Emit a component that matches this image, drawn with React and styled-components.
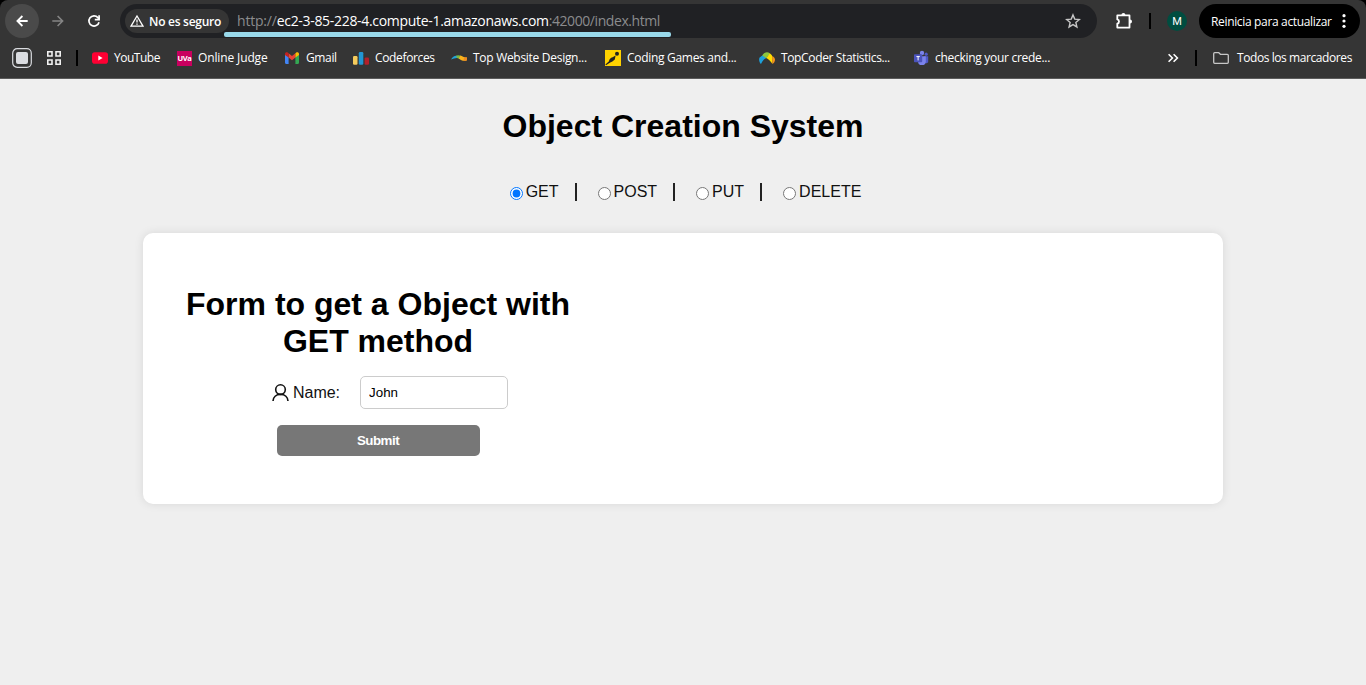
import React from "react";
import styled, { createGlobalStyle } from "styled-components";

const GlobalStyle = createGlobalStyle`
  *, *::before, *::after { box-sizing: border-box; }
  body {
    margin: 0;
    background: #efefef;
    color: #000;
    font-family: Arial, "Liberation Sans", sans-serif;
    font-size: 16px;
  }
`;

const Window = styled.div`
  min-height: 685px;
  overflow: hidden;
`;

/* ---------- browser chrome ---------- */

const Chrome = styled.header`
  height: 79px;
  background: #000;
  font-family: "Open Sans", "Noto Sans", sans-serif;
  color: #fff;
`;

const ChromeSurface = styled.div`
  height: 79px;
  background: #353535;
  border-radius: 8px 8px 0 0;
  border-bottom: 1px solid #5b5b5b;
`;

const Toolbar = styled.div`
  display: flex;
  align-items: center;
  height: 42px;
  padding: 0 6px 0 5px;
`;

const NavButton = styled.span`
  display: flex;
  align-items: center;
  justify-content: center;
  width: 34px;
  height: 34px;
  margin-right: 2px;
  border-radius: 50%;
  background: ${(p) => (p.$active ? "#4a4a4a" : "transparent")};
`;

const Omnibox = styled.div`
  position: relative;
  display: flex;
  align-items: center;
  width: 977px;
  height: 34px;
  margin-left: 7px;
  padding: 0 16px 0 5px;
  border-radius: 17px;
  background: #202124;
`;

const SecurityChip = styled.span`
  display: flex;
  align-items: center;
  gap: 5px;
  width: 104px;
  height: 24px;
  padding-left: 5px;
  border-radius: 12px;
  background: #353535;
  font-size: 12px;
  font-weight: 600;
  white-space: nowrap;
  letter-spacing: ${(p) => p.$track}px;
`;

const Url = styled.span`
  flex: 1;
  padding-left: 8px;
  font-size: 14px;
  line-height: 18px;
  color: #8b8c8e;
  white-space: nowrap;
`;

const UrlPart = styled.span`
  color: ${(p) => (p.$host ? "#fff" : "inherit")};
  letter-spacing: ${(p) => p.$track}px;
`;

const Marker = styled.i`
  position: absolute;
  left: 104px;
  top: 28px;
  width: 447px;
  height: 5px;
  border-radius: 2px;
  background: #99d9ea;
`;

const ToolbarActions = styled.div`
  display: flex;
  align-items: center;
  margin-left: 18px;
`;

const Separator = styled.i`
  width: 2px;
  height: 16px;
  background: #000;
  margin: ${(p) => p.$margin || "0"};
`;

const Avatar = styled.span`
  width: 20px;
  height: 20px;
  border-radius: 50%;
  background: #004d40;
  font-family: Roboto, sans-serif;
  font-size: 11px;
  line-height: 21px;
  text-align: center;
`;

const UpdatePill = styled.span`
  display: flex;
  align-items: center;
  justify-content: space-between;
  width: 161px;
  height: 34px;
  margin-left: 12px;
  padding: 0 14px 0 12px;
  border-radius: 17px;
  background: #000;
  font-size: 12px;
  white-space: nowrap;
  letter-spacing: ${(p) => p.$track}px;
`;

const BookmarksBar = styled.div`
  display: flex;
  align-items: center;
  height: 32px;
  padding-left: 12px;
  svg { flex: none; }
`;

const AppsIcon = styled.svg`
  margin-left: 14px;
`;

const Bookmark = styled.span`
  display: flex;
  align-items: center;
  gap: ${(p) => p.$gap || 6}px;
  flex: none;
  width: ${(p) => p.$width}px;
  font-size: 12px;
  line-height: 16px;
  white-space: nowrap;
  letter-spacing: ${(p) => p.$track || 0}px;
`;

const UvaBadge = styled.span`
  width: 15px;
  height: 15px;
  margin-left: 1px;
  background: #c9005f;
  font-size: 7.5px;
  font-weight: 700;
  line-height: 15px;
  text-align: center;
  letter-spacing: -0.3px;
`;

const BookmarksEnd = styled.div`
  display: flex;
  align-items: center;
  margin-left: auto;
`;

/* ---------- page ---------- */

const Page = styled.main`
  display: flex;
  flex-direction: column;
  align-items: center;
`;

const Title = styled.h1`
  margin: ${(p) => p.$margin};
  font-size: 32px;
  line-height: 37px;
  text-align: center;
`;

const MethodRow = styled.div`
  display: flex;
  align-items: flex-start;
  gap: 16px;
  height: 21px;
`;

const MethodOption = styled.label`
  display: flex;
  align-items: flex-start;
  line-height: 20px;
  color: #111;
  white-space: nowrap;
  input { margin: 5px 3px 0 5px; }
`;

const MethodDivider = styled.i`
  width: 2px;
  height: 18px;
  margin-top: 1px;
  background: #222;
`;

const Card = styled.section`
  width: 1080px;
  height: 271px;
  margin-top: 30px;
  padding: 53px 40px 0;
  border-radius: 10px;
  background: #fff;
  box-shadow: 0 0 10px rgba(0, 0, 0, 0.1);
`;

const Form = styled.form`
  display: flex;
  flex-direction: column;
  align-items: center;
  width: 390px;
`;

const Field = styled.label`
  display: flex;
  align-items: center;
  margin-left: 24px;
  color: #111;
  svg { margin: 0 4px 0 0; }
`;

const TextInput = styled.input`
  width: 148px;
  height: 33px;
  margin-left: 20px;
  padding: 8px;
  border: 1px solid #ccc;
  border-radius: 5px;
  font: 13.333px Arial, "Liberation Sans", sans-serif;
  color: #000;
  outline: none;
`;

const SubmitButton = styled.button`
  width: 203px;
  height: 31px;
  margin-top: 16px;
  padding: 0;
  border: 0;
  border-radius: 5px;
  background: #777;
  color: #fff;
  font: bold 13.333px Arial, "Liberation Sans", sans-serif;
  letter-spacing: -0.5px;
`;

/* ---------- icons ---------- */

const BackIcon = () => (
  <svg width="16" height="16" viewBox="0 0 16 16" fill="none" stroke="#fff" strokeWidth="1.8">
    <path d="M13.7 8H3.5M8.4 3L3.4 8l5 5" />
  </svg>
);
const ForwardIcon = () => (
  <svg width="16" height="16" viewBox="0 0 16 16" fill="none" stroke="#858585" strokeWidth="1.6">
    <path d="M2.3 8h10.2M7.6 3l5 5-5 5" />
  </svg>
);
const ReloadIcon = () => (
  <svg width="16" height="16" viewBox="0 0 16 16" fill="none" stroke="#fff" strokeWidth="1.7">
    <path d="M13 9.2A5.1 5.1 0 1 1 11.9 4.6L13.2 6.2" />
    <path d="M13.1 2.2v4.4H8.8" />
  </svg>
);
const WarningIcon = () => (
  <svg width="14" height="14" viewBox="0 0 14 14" fill="none" stroke="#fff" strokeWidth="1.3">
    <path d="M7 2L13 12.2H1Z" />
    <path d="M7 5.6v3M7 9.5v1.3" />
  </svg>
);
const StarIcon = () => (
  <svg width="16" height="16" viewBox="0 0 16 16" fill="none" stroke="#c7c7c7" strokeWidth="1.4">
    <path d="M8 1.9l1.75 4.2 4.55.4-3.45 3 1.04 4.45L8 11.6l-3.9 2.35L5.15 9.5 1.7 6.5l4.55-.4Z" />
  </svg>
);
const PuzzleIcon = () => (
  <svg width="18" height="18" viewBox="0 0 18 18" fill="none" stroke="#fff" strokeWidth="1.8" strokeLinejoin="round">
    <path d="M2.3 3.4h12.2v12.2H2.3v-3.9a2.2 2.2 0 0 0 0-4.3Z" />
    <path d="M6.4 3a2 2 0 0 1 4 0ZM15 7.5a2 2 0 0 1 0 4Z" fill="#fff" stroke="none" />
  </svg>
);
const DotsIcon = () => (
  <svg width="4" height="16" viewBox="0 0 4 16" fill="#fff">
    <circle cx="2" cy="2.7" r="1.6" />
    <circle cx="2" cy="8" r="1.6" />
    <circle cx="2" cy="13.3" r="1.6" />
  </svg>
);
const TabGroupIcon = () => (
  <svg width="20" height="20" viewBox="0 0 20 20">
    <rect x=".7" y=".7" width="18.6" height="18.6" rx="4.5" fill="none" stroke="#dadce0" strokeWidth="1.2" />
    <rect x="4" y="4" width="12" height="12" rx="2" fill="#dadce0" />
  </svg>
);
const GridIcon = () => (
  <AppsIcon width="16" height="16" viewBox="0 0 16 16" fill="none" stroke="#f1f1f1" strokeWidth="1.6">
    <path d="M1.8 1.8h4.2v4.2H1.8ZM10 1.8h4.2v4.2H10ZM1.8 10h4.2v4.2H1.8ZM10 10h4.2v4.2H10Z" />
  </AppsIcon>
);
const YouTubeIcon = () => (
  <svg width="16" height="16" viewBox="0 0 16 16">
    <rect x="0" y="2.3" width="16" height="11.4" rx="2.8" fill="#ff0033" />
    <path d="M6.3 5.6L10.6 8l-4.3 2.4Z" fill="#fff" />
  </svg>
);
const UvaIcon = () => <UvaBadge>UVa</UvaBadge>;
const GmailIcon = () => (
  <svg width="16" height="16" viewBox="0 0 16 16">
    <path d="M1 4v8.8c0 .7.5 1.2 1.1 1.2h2.5V6.8L1 4Z" fill="#4285f4" />
    <path d="M11.4 14h2.5c.6 0 1.1-.5 1.1-1.2V4l-3.6 2.8Z" fill="#34a853" />
    <path d="M4.6 3.3L8 5.9l3.4-2.6v4.2L8 10.2 4.6 7.5Z" fill="#ea4335" />
    <path d="M1 4c0-1.7 1.8-2.3 3-1.3l.6.5v4.4L1 4.9Z" fill="#c5221f" />
    <path d="M15 4c0-1.7-1.8-2.3-3-1.3l-.6.5v4.4L15 4.9Z" fill="#fbbc04" />
  </svg>
);
const CodeforcesIcon = () => (
  <svg width="16" height="16" viewBox="0 0 16 16">
    <rect x="0" y="6" width="4.5" height="8.8" rx="1.2" fill="#f5cb5c" />
    <rect x="5.8" y="2" width="4.5" height="12.8" rx="1.2" fill="#2196d3" />
    <rect x="11.6" y="7.4" width="4.4" height="7.4" rx="1.2" fill="#b3202a" />
  </svg>
);
const TopWebsiteIcon = () => (
  <svg width="16" height="16" viewBox="0 0 16 16">
    <path d="M0 9.6C1.5 6.3 4 5.2 6.2 5.8L8 8.4C5.2 7.6 2.8 8.6 0 9.6Z" fill="#22a3d8" />
    <path d="M5 5.8C6.6 4.8 8.7 5.2 10.2 6L8.3 8.8 6 8Z" fill="#7cba42" />
    <path d="M9.4 5.6C11.6 6.2 13 7.7 16 7.4L15.7 10.4C12.8 11.4 10.2 10.6 7.8 8.5Z" fill="#f9b31b" />
    <path d="M13 7.4C14 7.7 15 7.6 16 7.4L15.7 10.4C14.6 10.8 13.4 10.8 12.5 10.5Z" fill="#f08a24" />
  </svg>
);
const CodinGameIcon = () => (
  <svg width="16" height="16" viewBox="0 0 16 16">
    <rect width="16" height="16" fill="#ffd200" />
    <circle cx="12" cy="3.8" r="2" fill="#222" />
    <path d="M.4 14.6L4 11.2C4.2 9.2 5.6 7.8 7.6 7.2L10.6 5.6 9.8 9.6 7.4 11.4 5.2 12.6 1 15.2Z" fill="#222" />
  </svg>
);
const TopCoderIcon = () => (
  <svg width="16" height="16" viewBox="0 0 16 16">
    <path d="M3.6 5.2L8 8C4.7 8.6 3.5 11.5 2 14 .2 12.6-.4 9 .6 7.4Z" fill="#1da1dc" />
    <path d="M3.2 5.4C5.4 1.8 8.6 1.4 11 3.4L7.4 8.2Z" fill="#8cc63f" />
    <path d="M7.5 8L10.8 3.2C12.4 4.4 13.2 5.5 13.6 7L13.3 13.7C11.5 11.4 10 9.5 7.5 8Z" fill="#ffdd00" />
    <path d="M13.3 6.2C15 6.8 16 8.3 16 10 15.7 12 14.9 13.2 13.3 14Z" fill="#f7931e" />
  </svg>
);
const TeamsIcon = () => (
  <svg width="16" height="16" viewBox="0 0 16 16">
    <circle cx="13.2" cy="4.2" r="1.6" fill="#5059c9" />
    <path d="M11 6.2h4.2v4.2a2.2 2.2 0 0 1-4.2 1.4Z" fill="#5059c9" />
    <circle cx="9" cy="3" r="2.2" fill="#7b83eb" />
    <path d="M5 6.2h7.8v5a3.9 3.9 0 0 1-7.8 0Z" fill="#7b83eb" />
    <rect x="1" y="4.3" width="8.2" height="8" rx=".8" fill="#4b53bc" />
    <path d="M3.4 6.6h3.4M5.1 6.6v3.8" stroke="#fff" strokeWidth="1" />
  </svg>
);
const ChevronsIcon = () => (
  <svg width="12" height="12" viewBox="0 0 12 12" fill="none" stroke="#fff" strokeWidth="1.6">
    <path d="M1.6 2.2L5.4 6 1.6 9.8M6.6 2.2L10.4 6 6.6 9.8" />
  </svg>
);
const FolderIcon = () => (
  <svg width="16" height="16" viewBox="0 0 16 16" fill="none" stroke="#c7c7c7" strokeWidth="1.3" strokeLinejoin="round">
    <path d="M.7 3.7q0-1 1-1h4.1l1.6 1.6h6.9q1 0 1 1v7q0 1-1 1H1.7q-1 0-1-1Z" />
  </svg>
);
const PersonIcon = () => (
  <svg width="17" height="18" viewBox="0 0 17 18" fill="none" stroke="#111" strokeWidth="1.6">
    <circle cx="8.5" cy="5.6" r="4.8" />
    <path d="M1 17C1.2 13.2 4 10.4 8.5 10.4S15.8 13.2 16 17" />
  </svg>
);

/* ---------- data ---------- */

const bookmarks = [
  { label: "YouTube", icon: YouTubeIcon, width: 84, track: -0.48 },
  { label: "Online Judge", icon: UvaIcon, width: 108, track: -0.13 },
  { label: "Gmail", icon: GmailIcon, width: 69, track: -0.36 },
  { label: "Codeforces", icon: CodeforcesIcon, width: 98, track: -0.35 },
  { label: "Top Website Design...", icon: TopWebsiteIcon, width: 154, track: -0.29 },
  { label: "Coding Games and...", icon: CodinGameIcon, width: 154, track: -0.3 },
  { label: "TopCoder Statistics...", icon: TopCoderIcon, width: 154, track: -0.36 },
  { label: "checking your crede...", icon: TeamsIcon, width: 154, track: -0.29 },
];

const methods = ["GET", "POST", "PUT", "DELETE"];

export default function App() {
  return (
    <Window>
      <GlobalStyle />
      <Chrome>
        <ChromeSurface>
          <Toolbar>
            <NavButton $active><BackIcon /></NavButton>
            <NavButton><ForwardIcon /></NavButton>
            <NavButton><ReloadIcon /></NavButton>
            <Omnibox>
              <SecurityChip $track={-0.27}><WarningIcon />No es seguro</SecurityChip>
              <Url>
                <UrlPart $track={-0.2}>http://</UrlPart>
                <UrlPart $host $track={-0.31}>ec2-3-85-228-4.compute-1.amazonaws.com</UrlPart>
                <UrlPart $track={-0.42}>:42000/index.html</UrlPart>
              </Url>
              <StarIcon />
              <Marker />
            </Omnibox>
            <ToolbarActions>
              <PuzzleIcon />
              <Separator $margin="0 16px 0 16px" />
              <Avatar>M</Avatar>
              <UpdatePill $track={-0.34}>Reinicia para actualizar<DotsIcon /></UpdatePill>
            </ToolbarActions>
          </Toolbar>
          <BookmarksBar>
            <TabGroupIcon />
            <GridIcon />
            <Separator $margin="0 14px" />
            {bookmarks.map(({ label, icon: Icon, width, track }) => (
              <Bookmark key={label} $width={width} $track={track}><Icon />{label}</Bookmark>
            ))}
            <BookmarksEnd>
              <ChevronsIcon />
              <Separator $margin="0 16px 0 16px" />
              <Bookmark $width={153} $gap={8} $track={-0.42}><FolderIcon />Todos los marcadores</Bookmark>
            </BookmarksEnd>
          </BookmarksBar>
        </ChromeSurface>
      </Chrome>
      <Page>
        <Title $margin="29px 0 37px">Object Creation System</Title>
        <MethodRow>
          {methods.map((name, i) => (
            <React.Fragment key={name}>
              {i > 0 && <MethodDivider />}
              <MethodOption>
                <input type="radio" name="method" defaultChecked={i === 0} />{name}
              </MethodOption>
            </React.Fragment>
          ))}
        </MethodRow>
        <Card>
          <Form onSubmit={(e) => e.preventDefault()}>
            <Title $margin="0 0 16px">Form to get a Object with GET method</Title>
            <Field>
              <PersonIcon />Name:
              <TextInput defaultValue="John" />
            </Field>
            <SubmitButton>Submit</SubmitButton>
          </Form>
        </Card>
      </Page>
    </Window>
  );
}
